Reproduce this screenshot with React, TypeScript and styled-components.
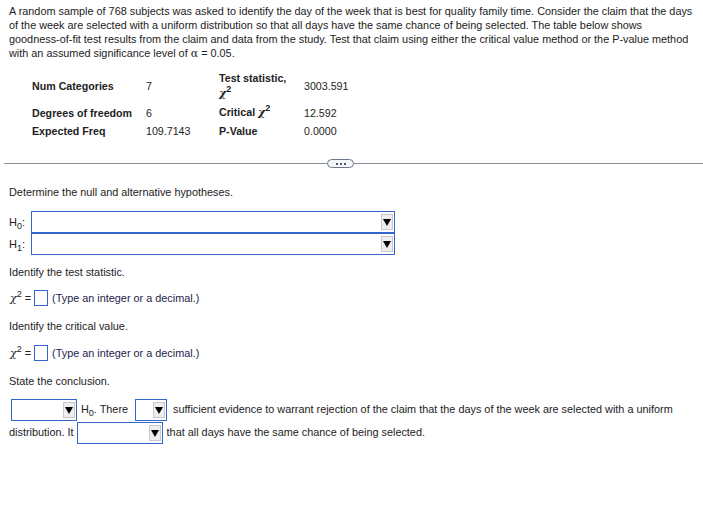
import React from 'react';
import { styled, createGlobalStyle } from 'styled-components';

const GlobalStyle = createGlobalStyle`
  html, body {
    margin: 0;
    padding: 0;
    background: #ffffff;
  }
  body {
    font-family: 'Liberation Sans', Arial, sans-serif;
    font-size: 10.87px;
    color: #222222;
  }
`;

const Page = styled.div`
  padding: 4px 0 0 0;
  width: 703px;
`;

const Block = styled.div<{ $top?: number }>`
  padding: 0 8px 0 9px;
  margin-top: ${({ $top }) => $top ?? 0}px;
  line-height: 14px;
`;

const Intro = styled(Block)`
  white-space: nowrap;
`;

const Alpha = styled.span`
  font-family: 'DejaVu Serif', 'Liberation Serif', serif;
  font-size: 11px;
`;

const StatsTable = styled.table`
  margin: 8px 0 0 30px;
  border-collapse: collapse;
  line-height: 14px;
  font-size: 10.67px;

  td {
    padding: 2px 2px;
    vertical-align: middle;
  }
`;

const LabelCell = styled.td<{ $w: number; $tall?: boolean }>`
  font-weight: bold;
  width: ${({ $w }) => $w}px;
  line-height: ${({ $tall }) => ($tall ? 15 : 14)}px;
`;

const ValueCell = styled.td<{ $w?: number }>`
  width: ${({ $w }) => ($w ? `${$w}px` : 'auto')};
`;

const Chi = styled.span`
  font-family: 'DejaVu Serif', 'Liberation Serif', serif;
  font-style: italic;
  font-size: 11px;
`;

const Sup = styled.sup`
  font-size: 9px;
  line-height: 0;
`;

const Divider = styled.div`
  display: flex;
  align-items: center;
  height: 9px;
  margin-top: 19px;
  padding-left: 4px;
`;

const Rule = styled.div<{ $w?: number }>`
  height: 1px;
  background: #8a919b;
  ${({ $w }) => ($w ? `width: ${$w}px;` : 'flex: 1;')}
`;

const MorePill = styled.div`
  width: 25px;
  height: 7px;
  border: 1px solid #6b7789;
  border-radius: 5px;
  background: #f6f7f9;
  display: flex;
  align-items: center;
  justify-content: center;
  gap: 2px;

  span {
    width: 2px;
    height: 2px;
    background: #4a5568;
  }
`;

const HypoList = styled.div`
  margin-top: 12px;
  padding-left: 9px;
  display: flex;
  flex-direction: column;
`;

const HypoRow = styled.div`
  display: flex;
  align-items: center;
  height: 22px;
`;

const HypoLabel = styled.div`
  width: 22px;
  font-size: 11px;
  color: #222;
`;

const Sub = styled.sub`
  font-size: 9px;
  line-height: 0;
`;

const WideSelect = styled.div`
  width: 364px;
  height: 22px;
  box-sizing: border-box;
  border: 1px solid #3366cc;
  display: flex;
  align-items: center;
  justify-content: flex-end;
  padding-right: 1px;
`;

const ArrowBtn = styled.div`
  width: 12px;
  height: 16px;
  box-sizing: border-box;
  background: #eeeeee;
  border: 1px solid #c8c8c8;
  display: flex;
  align-items: center;
  justify-content: center;

  svg {
    display: block;
  }
`;

const Arrow = () => (
  <ArrowBtn>
    <svg width="8" height="7" viewBox="0 0 8 7">
      <polygon points="0,0 8,0 4,7" fill="#000" />
    </svg>
  </ArrowBtn>
);

const AnswerRow = styled.div<{ $top: number }>`
  margin-top: ${({ $top }) => $top}px;
  padding-left: 10px;
  display: flex;
  align-items: center;
  height: 18px;
  gap: 3px;
`;

const AnswerBox = styled.div`
  width: 14px;
  height: 16px;
  box-sizing: border-box;
  border: 1px solid #3366cc;
`;

const Hint = styled.span`
  margin-left: 1px;
  color: #22224a;
`;

const Conclusion = styled.div`
  margin-top: 10px;
  padding: 0 8px 0 9px;
  line-height: 23px;
  white-space: nowrap;
`;

const InlineSelect = styled.span<{ $w: number; $ml?: number; $mr?: number }>`
  display: inline-flex;
  vertical-align: middle;
  width: ${({ $w }) => $w}px;
  height: 22px;
  box-sizing: border-box;
  border: 1px solid #3366cc;
  align-items: center;
  justify-content: flex-end;
  padding-right: 1px;
  margin: 0 ${({ $mr }) => $mr ?? 4}px 0 ${({ $ml }) => $ml ?? 4}px;
`;

export default function App() {
  return (
    <>
      <GlobalStyle />
      <Page>
        <Intro>
          A random sample of 768 subjects was asked to identify the day of the week that is best for quality
          family time. Consider the claim that the days
          <br />
          of the week are selected with a uniform distribution so that all days have the same chance of being
          selected. The table below shows
          <br />
          goodness-of-fit test results from the claim and data from the study. Test that claim using either the
          critical value method or the P-value method
          <br />
          with an assumed significance level of <Alpha>α</Alpha> = 0.05.
        </Intro>

        <StatsTable>
          <tbody>
            <tr>
              <LabelCell $w={110}>Num Categories</LabelCell>
              <ValueCell $w={69}>7</ValueCell>
              <LabelCell $w={81} $tall>
                Test statistic,
                <br />
                <Chi>χ</Chi>
                <Sup>2</Sup>
              </LabelCell>
              <ValueCell>3003.591</ValueCell>
            </tr>
            <tr>
              <LabelCell $w={110}>Degrees of freedom</LabelCell>
              <ValueCell $w={69}>6</ValueCell>
              <LabelCell $w={81}>
                Critical <Chi>χ</Chi>
                <Sup>2</Sup>
              </LabelCell>
              <ValueCell>12.592</ValueCell>
            </tr>
            <tr>
              <LabelCell $w={110}>Expected Freq</LabelCell>
              <ValueCell $w={69}>109.7143</ValueCell>
              <LabelCell $w={81}>P-Value</LabelCell>
              <ValueCell>0.0000</ValueCell>
            </tr>
          </tbody>
        </StatsTable>

        <Divider>
          <Rule $w={323} />
          <MorePill>
            <span />
            <span />
            <span />
          </MorePill>
          <Rule />
        </Divider>

        <Block $top={17}>Determine the null and alternative hypotheses.</Block>

        <HypoList>
          <HypoRow>
            <HypoLabel>
              H<Sub>0</Sub>:
            </HypoLabel>
            <WideSelect>
              <Arrow />
            </WideSelect>
          </HypoRow>
          <HypoRow>
            <HypoLabel>
              H<Sub>1</Sub>:
            </HypoLabel>
            <WideSelect>
              <Arrow />
            </WideSelect>
          </HypoRow>
        </HypoList>

        <Block $top={10}>Identify the test statistic.</Block>
        <AnswerRow $top={10}>
          <span>
            <Chi>χ</Chi>
            <Sup>2</Sup> =
          </span>
          <AnswerBox />
          <Hint>(Type an integer or a decimal.)</Hint>
        </AnswerRow>

        <Block $top={12}>Identify the critical value.</Block>
        <AnswerRow $top={11}>
          <span>
            <Chi>χ</Chi>
            <Sup>2</Sup> =
          </span>
          <AnswerBox />
          <Hint>(Type an integer or a decimal.)</Hint>
        </AnswerRow>

        <Block $top={12}>State the conclusion.</Block>

        <Conclusion>
          <InlineSelect $w={66} $ml={2}>
            <Arrow />
          </InlineSelect>
          H<Sub>0</Sub>. There
          <InlineSelect $w={32} $ml={7} $mr={6}>
            <Arrow />
          </InlineSelect>
          sufficient evidence to warrant rejection of the claim that the days of the week are selected with a
          uniform
          <br />
          distribution. It
          <InlineSelect $w={86} $ml={3}>
            <Arrow />
          </InlineSelect>
          that all days have the same chance of being selected.
        </Conclusion>
      </Page>
    </>
  );
}
